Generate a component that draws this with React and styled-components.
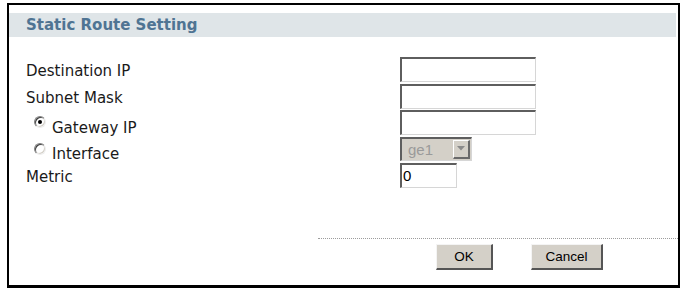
import React from "react";
import styled, { createGlobalStyle } from "styled-components";

const GlobalStyle = createGlobalStyle`
  html, body {
    margin: 0;
    padding: 0;
    background: #ffffff;
  }
`;

const Frame = styled.div`
  box-sizing: border-box;
  margin: 3px 0 0 7px;
  width: 673px;
  height: 285px;
  border: 2px solid #000;
  border-bottom-width: 3px;
  padding-top: 8px;
  background: #fff;
  font-family: "DejaVu Sans", Verdana, sans-serif;
  color: #1a1a1a;
`;

const Header = styled.div`
  height: 24px;
  margin-right: 2px;
  padding-left: 17px;
  display: flex;
  align-items: center;
  background: #dfe5e8;
  color: #4f7493;
  font-weight: bold;
  font-size: 15px;
`;

const Form = styled.div`
  margin-top: 20px;
  display: grid;
  grid-template-columns: 391px 1fr;
  grid-auto-rows: 26.5px;
`;

const Label = styled.div`
  padding-left: 17px;
  padding-top: ${(p) => p.$top || 5}px;
  font-size: 15px;
  line-height: 18px;
  white-space: nowrap;
`;

const RadioLabel = styled(Label)`
  display: flex;
  align-items: flex-start;
  padding-left: 25px;
`;

const Radio = styled.span`
  box-sizing: border-box;
  width: 12px;
  height: 12px;
  margin-top: ${(p) => p.$shift || -2}px;
  margin-right: 6px;
  border-radius: 50%;
  border: 1px solid;
  border-color: #808080 #eeeeee #eeeeee #808080;
  box-shadow: inset 1px 1px 0 #404040, inset -1px -1px 0 #d4d0c8;
  background: #fff;
  display: flex;
  align-items: center;
  justify-content: center;

  &::after {
    content: "";
    width: 4px;
    height: 4px;
    border-radius: 50%;
    background: ${(p) => (p.$checked ? "#000" : "transparent")};
  }
`;

const Field = styled.div`
  display: flex;
  align-items: flex-start;
`;

const TextBox = styled.div`
  box-sizing: border-box;
  width: ${(p) => p.$w}px;
  height: 25px;
  border-style: solid;
  border-width: 2px 1px 1px 2px;
  border-color: #5e5e5e #d6d6d6 #d6d6d6 #5e5e5e;
  background: #fff;
  padding-left: 1px;
  font-family: "Liberation Sans", Arial, sans-serif;
  font-size: 15px;
  line-height: 21px;
  color: #000;
`;

const Select = styled.div`
  box-sizing: border-box;
  width: 72px;
  height: 24px;
  border-style: solid;
  border-width: 2px 1px 1px 2px;
  border-color: #5e5e5e #d6d6d6 #d6d6d6 #5e5e5e;
  background: #d4d0c8;
  display: flex;
  align-items: center;
  justify-content: space-between;
  padding: 0 1px 0 6px;
  font-family: "Liberation Sans", Arial, sans-serif;
  font-size: 15px;
  color: #9a9a9a;
`;

const DropButton = styled.div`
  box-sizing: border-box;
  width: 17px;
  height: 19px;
  border-style: solid;
  border-width: 1px 2px 2px 1px;
  border-color: #ffffff #6a6a6a #6a6a6a #ffffff;
  background: #d4d0c8;
  display: flex;
  align-items: center;
  justify-content: center;
`;

const Footer = styled.div`
  margin-top: 48px;
  margin-left: 309px;
  border-top: 1px dotted #9c9c9c;
  padding: 5px 0 0 118px;
  display: flex;
  gap: 38px;
`;

const Button = styled.div`
  box-sizing: border-box;
  width: ${(p) => p.$w}px;
  height: 26px;
  border-style: solid;
  border-width: 1px 2px 2px 1px;
  border-color: #f4f4f4 #555555 #555555 #f4f4f4;
  background: #d4d0c8;
  display: flex;
  align-items: center;
  justify-content: center;
  font-family: "Liberation Sans", Arial, sans-serif;
  font-size: 13.5px;
  color: #000;
`;

export default function App() {
  return (
    <>
      <GlobalStyle />
      <Frame>
        <Header>Static Route Setting</Header>
        <Form>
          <Label>Destination IP</Label>
          <Field>
            <TextBox $w={136} />
          </Field>

          <Label>Subnet Mask</Label>
          <Field>
            <TextBox $w={136} />
          </Field>

          <RadioLabel $top={9}>
            <Radio $checked $shift={-3} />
            Gateway IP
          </RadioLabel>
          <Field>
            <TextBox $w={136} />
          </Field>

          <RadioLabel $top={8}>
            <Radio />
            Interface
          </RadioLabel>
          <Field>
            <Select>
              ge1
              <DropButton>
                <svg width="8" height="5" viewBox="0 0 8 5">
                  <path d="M0 0 H8 L4 4.5 Z" fill="#8a8a8a" />
                </svg>
              </DropButton>
            </Select>
          </Field>

          <Label>Metric</Label>
          <Field>
            <TextBox $w={57}>0</TextBox>
          </Field>
        </Form>
        <Footer>
          <Button $w={57}>OK</Button>
          <Button $w={72}>Cancel</Button>
        </Footer>
      </Frame>
    </>
  );
}
